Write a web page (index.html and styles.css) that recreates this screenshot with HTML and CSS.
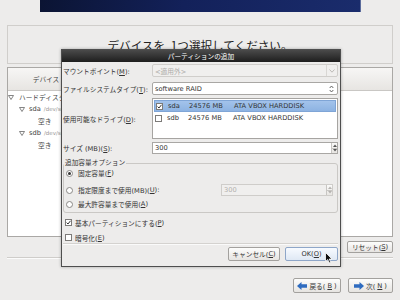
FILE: index.html
```html
<!DOCTYPE html>
<html lang="ja">
<head>
    <meta charset="UTF-8">
    <meta name="viewport" content="width=device-width, initial-scale=1.0">
    <title>パーティションの追加</title>
    <link rel="stylesheet" href="styles.css">
</head>
<body>
    <div class="banner"></div>
    <div class="heading">デバイスを&ensp;1つ選択してください。</div>

    <div class="tree">
        <div class="tree-head"><span class="col-device">デバイス</span></div>
        <div class="tree-row lvl0"><span class="exp"><svg width="6" height="5" viewBox="0 0 6 5"><polygon points="0.5,0.5 5.5,0.5 3,4.5" fill="none" stroke="#666" stroke-width="0.8"/></svg></span>ハードディスク</div>
        <div class="tree-row lvl1"><span class="exp"><svg width="6" height="5" viewBox="0 0 6 5"><polygon points="0.5,0.5 5.5,0.5 3,4.5" fill="none" stroke="#666" stroke-width="0.8"/></svg></span>sda <span class="dev">/dev/sda</span></div>
        <div class="tree-row lvl2">空き</div>
        <div class="tree-row lvl1"><span class="exp"><svg width="6" height="5" viewBox="0 0 6 5"><polygon points="0.5,0.5 5.5,0.5 3,4.5" fill="none" stroke="#666" stroke-width="0.8"/></svg></span>sdb <span class="dev">/dev/sdb</span></div>
        <div class="tree-row lvl2">空き</div>
    </div>
    <div class="tree-actions">
        <button class="btn reset-btn">リセット(<u>S</u>)</button>
    </div>
    <hr class="sep">
    <div class="nav">
        <button class="btn nav-btn back-btn">
            <svg width="10" height="8" viewBox="0 0 10 8"><polygon points="0,4 4.5,0 4.5,2.3 10,2.3 10,5.7 4.5,5.7 4.5,8" fill="#2f6cc0"/></svg>
            戻る(<u>B</u>)
        </button>
        <button class="btn nav-btn next-btn">
            <svg width="10" height="8" viewBox="0 0 10 8"><polygon points="10,4 5.5,0 5.5,2.3 0,2.3 0,5.7 5.5,5.7 5.5,8" fill="#2f6cc0"/></svg>
            次(<u>N</u>)
        </button>
    </div>

    <div class="dialog">
        <div class="dlg-title">パーティションの追加</div>
        <div class="dlg-body">
            <div class="field f-mount">
                <label>マウントポイント(<u>M</u>):</label>
                <div class="combo disabled">
                    <span class="combo-text">&lt;適用外&gt;</span>
                    <span class="combo-btn"><svg width="6" height="4" viewBox="0 0 6 4"><polyline points="0.5,0.5 3,3.2 5.5,0.5" fill="none" stroke="#b5b3b0" stroke-width="0.9"/></svg></span>
                </div>
            </div>
            <div class="field f-type">
                <label>ファイルシステムタイプ(<u>T</u>):</label>
                <div class="combo">
                    <span class="combo-text">software RAID</span>
                    <span class="combo-btn updown"><svg width="5" height="8" viewBox="0 0 5 8"><polyline points="0.7,3 2.5,1 4.3,3" fill="none" stroke="#555" stroke-width="0.9"/><polyline points="0.7,5 2.5,7 4.3,5" fill="none" stroke="#555" stroke-width="0.9"/></svg></span>
                </div>
            </div>
            <div class="field f-drives">
                <label>使用可能なドライブ(<u>D</u>):</label>
                <div class="drive-list">
                    <div class="drive selected">
                        <span class="cb checked"><svg width="5" height="5" viewBox="0 0 5 5"><polyline points="0.6,2.6 2,4 4.5,0.8" fill="none" stroke="#333" stroke-width="1"/></svg></span>
                        <span class="d-name">sda</span><span class="d-size">24576 MB</span><span>ATA VBOX HARDDISK</span>
                    </div>
                    <div class="drive">
                        <span class="cb"></span>
                        <span class="d-name">sdb</span><span class="d-size">24576 MB</span><span>ATA VBOX HARDDISK</span>
                    </div>
                </div>
            </div>
            <div class="field f-size">
                <label>サイズ (MB)(<u>S</u>):</label>
                <div class="spin">
                    <span class="spin-val">300</span>
                    <span class="spin-btns">
                        <span><svg width="4" height="3" viewBox="0 0 4 3"><polygon points="0,3 2,0.5 4,3" fill="#555"/></svg></span>
                        <span><svg width="4" height="3" viewBox="0 0 4 3"><polygon points="0,0 2,2.5 4,0" fill="#555"/></svg></span>
                    </span>
                </div>
            </div>

            <fieldset class="options">
                <legend>追加容量オプション</legend>
                <div class="opt opt-fixed">
                    <span class="radio on"></span>固定容量(<u>F</u>)
                </div>
                <div class="opt opt-limit">
                    <span class="radio"></span>指定限度まで使用(MB)(<u>U</u>):
                    <div class="spin limit-spin disabled">
                        <span class="spin-val">300</span>
                        <span class="spin-btns">
                            <span><svg width="4" height="3" viewBox="0 0 4 3"><polygon points="0,3 2,0.5 4,3" fill="#b5b3b0"/></svg></span>
                            <span><svg width="4" height="3" viewBox="0 0 4 3"><polygon points="0,0 2,2.5 4,0" fill="#b5b3b0"/></svg></span>
                        </span>
                    </div>
                </div>
                <div class="opt opt-max">
                    <span class="radio"></span>最大許容量まで使用(<u>A</u>)
                </div>
            </fieldset>

            <div class="check check-primary">
                <span class="cb checked"><svg width="5" height="5" viewBox="0 0 5 5"><polyline points="0.6,2.6 2,4 4.5,0.8" fill="none" stroke="#333" stroke-width="1"/></svg></span>基本パーティションにする(<u>P</u>)
            </div>
            <div class="check check-crypt">
                <span class="cb"></span>暗号化(<u>E</u>)
            </div>

            <hr class="dlg-sep">
            <div class="dlg-actions">
                <button class="btn cancel-btn">キャンセル(<u>C</u>)</button>
                <button class="btn ok-btn">OK(<u>O</u>)</button>
            </div>
        </div>
    </div>

    <svg class="cursor" width="8" height="12" viewBox="0 0 8 12"><path d="M0.5,0.5 L0.5,9.5 L2.7,7.5 L4.4,11 L5.8,10.3 L4.2,7 L7,7 Z" fill="#111" stroke="#fff" stroke-width="0.8"/></svg>
</body>
</html>
```

FILE: styles.css
```css
* {
    box-sizing: border-box;
}

body {
    margin: 0;
    width: 400px;
    height: 300px;
    overflow: hidden;
    position: relative;
    background-color: #edeceb;
    font-family: "DejaVu Sans", "Noto Sans CJK JP", sans-serif;
    font-size: 6.7px;
    color: #333;
}

u {
    text-decoration: underline;
}

.banner {
    width: 321px;
    height: 12px;
    margin-left: 40px;
    background: linear-gradient(100deg, #0b1433 0%, #13215a 45%, #1a2c6c 100%);
    border-right: 1px solid #5b6b9b;
}

.heading {
    height: 39px;
    margin: 13px 7px 0;
    border: 1px solid #d0cecb;
    display: flex;
    align-items: center;
    justify-content: center;
    font-family: "Noto Sans CJK JP", sans-serif;
    font-size: 11.6px;
    color: #222;
}

/* device tree behind the dialog */
.tree {
    height: 170px;
    margin: 3px 7px 0;
    border: 1px solid #aaa8a5;
    background-color: #fff;
}

.tree-head {
    height: 23px;
    display: flex;
    background: linear-gradient(#f7f6f5, #e7e5e2);
    border-bottom: 1px solid #c9c7c4;
}

.col-device {
    width: 77px;
    display: flex;
    align-items: center;
    justify-content: center;
    border-right: 1px solid #d3d1ce;
    color: #444;
}

.tree-row {
    height: 12px;
    display: flex;
    align-items: center;
    white-space: nowrap;
    color: #444;
}

.exp {
    display: flex;
    margin-right: 5px;
}

.lvl1 {
    padding-left: 11px;
}

.lvl1 .exp {
    margin-right: 4px;
}

.lvl2 {
    padding-left: 30px;
}

.dev {
    font-size: 5.5px;
    color: #9a9896;
    margin-left: 3px;
}

.tree-actions {
    display: flex;
    justify-content: flex-end;
    margin: 4px 7px 0;
}

.sep {
    margin: 4px 7px 0;
    border: 0;
    border-top: 1px solid #cfcdca;
    border-bottom: 1px solid #fbfbfb;
    height: 0;
}

.nav {
    display: flex;
    justify-content: flex-end;
    gap: 7px;
    margin: 19px 7px 0;
}

/* buttons */
.btn {
    font-family: inherit;
    font-size: 6.7px;
    color: #333;
    padding: 0;
    display: flex;
    align-items: center;
    justify-content: center;
    border: 1px solid #a3a19e;
    border-radius: 2px;
    background: linear-gradient(#fdfdfc, #e6e4e1);
}

.reset-btn {
    width: 46px;
    height: 12px;
}

.nav-btn {
    height: 15px;
    gap: 2px;
}

.back-btn {
    width: 48px;
}

.next-btn {
    width: 45px;
}

/* dialog */
.dialog {
    position: absolute;
    left: 61px;
    top: 49px;
    width: 280px;
    height: 218px;
    border: 1px solid #4e4e4e;
    background-color: #edeceb;
    box-shadow: 0 0 3px rgba(0, 0, 0, 0.3);
}

.dlg-title {
    height: 12px;
    display: flex;
    align-items: center;
    justify-content: center;
    background: linear-gradient(#4a4a4a, #1e1e1e);
    color: #fff;
}

.dlg-body {
    padding: 0 2px 0 1px;
}

.field {
    display: flex;
    align-items: center;
}

.field label {
    width: 89px;
    flex: none;
    white-space: nowrap;
}

.field > div {
    flex: 1;
}

.f-mount {
    margin-top: 2px;
}

.f-type {
    margin-top: 5px;
}

.f-drives {
    margin-top: 3px;
}

.f-size {
    margin-top: 3px;
}

.combo {
    height: 13px;
    display: flex;
    align-items: center;
    border: 1px solid #a9a7a4;
    border-radius: 2px;
    background-color: #fff;
    padding-left: 2px;
}

.combo.disabled {
    background-color: #f0efee;
    border-color: #d0cecb;
    color: #aeacaa;
}

.combo-text {
    flex: 1;
}

.combo-btn {
    width: 11px;
    height: 100%;
    display: flex;
    align-items: center;
    justify-content: center;
    border-left: 1px solid #d9d7d4;
}

.combo-btn.updown {
    border-left: none;
}

.drive-list {
    height: 41px;
    border: 1px solid #a6a4a1;
    background-color: #fff;
    padding: 1px;
}

.drive {
    height: 12px;
    display: flex;
    align-items: center;
    padding-left: 1px;
    white-space: nowrap;
}

.drive.selected {
    background: linear-gradient(#a3c3eb, #8db3e2);
    border: 1px solid #7fa5d6;
}

.drive .cb {
    margin-right: 5px;
}

.d-name {
    width: 21px;
}

.d-size {
    width: 45px;
}

.cb {
    width: 7px;
    height: 7px;
    flex: none;
    display: flex;
    align-items: center;
    justify-content: center;
    border: 1px solid #7d7b79;
    background-color: #fff;
}

.spin {
    height: 12px;
    display: flex;
    border: 1px solid #a9a7a4;
    background-color: #fff;
}

.spin-val {
    flex: 1;
    display: flex;
    align-items: center;
    padding-left: 2px;
}

.spin-btns {
    width: 6px;
    display: flex;
    flex-direction: column;
    border-left: 1px solid #c8c6c3;
    background: linear-gradient(#fafaf9, #e8e6e3);
}

.spin-btns span {
    flex: 1;
    display: flex;
    align-items: center;
    justify-content: center;
}

.spin-btns span + span {
    border-top: 1px solid #c8c6c3;
}

.spin.disabled {
    background-color: #f0efee;
    border-color: #cfcdca;
    color: #b2b0ad;
}

/* extra size options */
.options {
    margin: 5px 0 0;
    padding: 0 0 2px 2px;
    border: 1px solid #cac8c5;
    border-radius: 3px;
    min-width: 0;
}

.options legend {
    padding: 0 1px;
    margin-left: -2px;
    line-height: 8px;
}

.opt {
    height: 12px;
    display: flex;
    align-items: center;
    white-space: nowrap;
}

.opt-limit {
    margin-top: 5px;
}

.opt-max {
    margin-top: 2px;
}

.radio {
    width: 7px;
    height: 7px;
    margin-right: 5px;
    border: 1px solid #8a8886;
    border-radius: 50%;
    background-color: #fff;
    display: flex;
    align-items: center;
    justify-content: center;
}

.radio.on::after {
    content: "";
    width: 3px;
    height: 3px;
    border-radius: 50%;
    background-color: #333;
}

.limit-spin {
    width: 112px;
    margin-left: auto;
    margin-right: 4px;
}

.check {
    height: 11px;
    display: flex;
    align-items: center;
    margin-top: 4px;
    padding-left: 2px;
    white-space: nowrap;
}

.check .cb {
    margin-right: 3px;
}

.dlg-sep {
    margin: 0;
    border: 0;
    border-top: 1px solid #d4d2cf;
    border-bottom: 1px solid #fafafa;
    height: 0;
}

.dlg-actions {
    display: flex;
    justify-content: flex-end;
    gap: 5px;
    margin-top: 2px;
}

.cancel-btn {
    width: 52px;
    height: 14px;
}

.ok-btn {
    width: 53px;
    height: 14px;
    border-color: #8ea6c8;
    background: linear-gradient(#f7faff, #dfe8f4);
}

.cursor {
    position: absolute;
    left: 325px;
    top: 252px;
}
```
